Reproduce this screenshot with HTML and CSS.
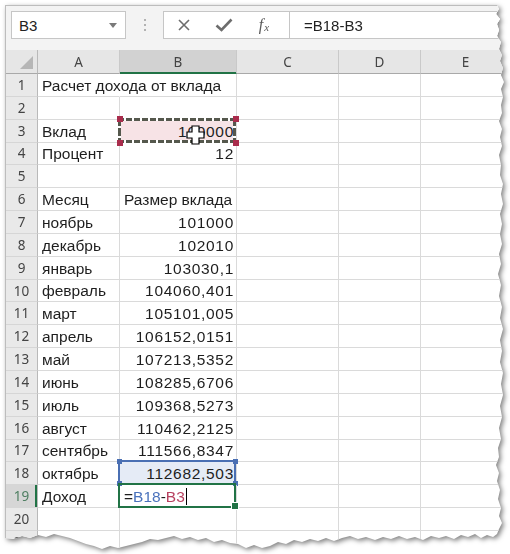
FILE: index.html
```html
<!DOCTYPE html>
<html lang="ru">
<head>
    <meta charset="UTF-8">
    <title>Расчет дохода от вклада</title>
    <link rel="stylesheet" href="styles.css">
</head>
<body>
    <div class="frame">
        <div class="sheet">
            <!-- строка имени и формулы -->
            <div class="toolbar">
                <div class="namebox">
                    <span>B3</span>
                    <svg class="drop" width="8" height="5" viewBox="0 0 8 5"><path d="M0 0h8L4 5z" fill="#7a7a7a"/></svg>
                </div>
                <div class="grip"><i></i><i></i><i></i></div>
                <div class="formula">
                    <div class="fbtns">
                        <span class="fbtn">
                            <svg width="14" height="14" viewBox="0 0 14 14"><path d="M2 2l10 10M12 2L2 12" stroke="#6d6d6d" stroke-width="1.6" fill="none"/></svg>
                        </span>
                        <span class="fbtn">
                            <svg width="18" height="14" viewBox="0 0 18 14"><path d="M1.5 7.5l5 4.5L16.5 1.5" stroke="#6d6d6d" stroke-width="2.6" fill="none"/></svg>
                        </span>
                        <span class="fbtn fx">f<small>x</small></span>
                    </div>
                    <div class="finput">=B18-B3</div>
                </div>
            </div>

            <table class="grid">
                <colgroup>
                    <col style="width:32px">
                    <col style="width:82px">
                    <col style="width:117px">
                    <col style="width:102px">
                    <col style="width:82px">
                    <col style="width:90px">
                </colgroup>
                <thead>
                    <tr>
                        <th class="corner"></th>
                        <th>A</th>
                        <th class="col-sel">B</th>
                        <th>C</th>
                        <th>D</th>
                        <th>E</th>
                    </tr>
                </thead>
                <tbody>
                    <tr><th>1</th><td class="spill">Расчет дохода от вклада</td><td></td><td></td><td></td><td></td></tr>
                    <tr><th>2</th><td></td><td></td><td></td><td></td><td></td></tr>
                    <tr><th>3</th><td>Вклад</td><td class="num ref-copy">100000
                        <svg class="cursor" width="19" height="20" viewBox="0 0 19 20"><path d="M6 1h7v6h5v6h-5v6H6v-6H1V7h5z" fill="#fff" stroke="#000" stroke-width="1.2"/></svg>
                    </td><td></td><td></td><td></td></tr>
                    <tr><th>4</th><td>Процент</td><td class="num">12</td><td></td><td></td><td></td></tr>
                    <tr><th>5</th><td></td><td></td><td></td><td></td><td></td></tr>
                    <tr><th>6</th><td>Месяц</td><td>Размер вклада</td><td></td><td></td><td></td></tr>
                    <tr><th>7</th><td>ноябрь</td><td class="num">101000</td><td></td><td></td><td></td></tr>
                    <tr><th>8</th><td>декабрь</td><td class="num">102010</td><td></td><td></td><td></td></tr>
                    <tr><th>9</th><td>январь</td><td class="num">103030,1</td><td></td><td></td><td></td></tr>
                    <tr><th>10</th><td>февраль</td><td class="num">104060,401</td><td></td><td></td><td></td></tr>
                    <tr><th>11</th><td>март</td><td class="num">105101,005</td><td></td><td></td><td></td></tr>
                    <tr><th>12</th><td>апрель</td><td class="num">106152,0151</td><td></td><td></td><td></td></tr>
                    <tr><th>13</th><td>май</td><td class="num">107213,5352</td><td></td><td></td><td></td></tr>
                    <tr><th>14</th><td>июнь</td><td class="num">108285,6706</td><td></td><td></td><td></td></tr>
                    <tr><th>15</th><td>июль</td><td class="num">109368,5273</td><td></td><td></td><td></td></tr>
                    <tr><th>16</th><td>август</td><td class="num">110462,2125</td><td></td><td></td><td></td></tr>
                    <tr><th>17</th><td>сентябрь</td><td class="num">111566,8347</td><td></td><td></td><td></td></tr>
                    <tr><th>18</th><td>октябрь</td><td class="num ref-blue">112682,503</td><td></td><td></td><td></td></tr>
                    <tr><th class="row-sel">19</th><td>Доход</td><td class="active">=<span class="r-blue">B18</span>-<span class="r-red">B3</span><span class="caret"></span></td><td></td><td></td><td></td></tr>
                    <tr><th>20</th><td></td><td></td><td></td><td></td><td></td></tr>
                    <tr><th>21</th><td></td><td></td><td></td><td></td><td></td></tr>
                </tbody>
            </table>
        </div>
    </div>
</body>
</html>
```

FILE: styles.css
```css
* {
    margin: 0;
    padding: 0;
    box-sizing: border-box;
}

body {
    width: 510px;
    height: 554px;
    overflow: hidden;
    background: #fff;
    font-family: "Liberation Sans", Arial, sans-serif;
    color: #1e1e1e;
}

/* тень вокруг рваного листа */
.frame {
    padding: 5px 0 0 5px;
    filter: drop-shadow(2px 2px 2.5px rgba(0,0,0,0.5));
}

.sheet {
    width: 502px;
    height: 545px;
    overflow: hidden;
    background: #fff;
    border-top: 1px solid #bdbdbd;
    border-left: 1px solid #bdbdbd;
    display: flex;
    flex-direction: column;
    clip-path: polygon(
        0 0, 492px 0, 494px 4px, 491px 9px, 495px 14px, 492px 19px, 494px 25px, 492px 31px,
        496px 37px, 494px 44px, 497px 50px, 495px 56px, 498px 63px, 496px 70px, 499px 77px,
        496px 84px, 498px 92px, 496px 100px, 497px 108px, 494px 116px, 497px 124px, 495px 132px,
        497px 141px, 494px 150px, 496px 160px, 495px 170px, 498px 179px, 496px 189px, 498px 199px,
        495px 209px, 497px 219px, 495px 229px, 497px 239px, 494px 249px, 496px 259px, 493px 269px,
        496px 280px, 494px 291px, 497px 302px, 495px 313px, 498px 324px, 495px 335px, 497px 346px,
        495px 357px, 498px 368px, 496px 379px, 498px 390px, 495px 401px, 497px 412px, 494px 423px,
        496px 434px, 493px 443px, 494px 452px, 491px 460px, 494px 468px, 492px 476px, 495px 485px,
        493px 494px, 496px 503px, 494px 511px, 497px 518px, 494px 524px, 492px 529px, 488px 532px,
        482px 530px, 476px 533px, 470px 529px, 463px 532px, 456px 530px, 449px 534px, 441px 531px,
        434px 533px, 426px 531px, 418px 535px, 410px 532px, 402px 534px, 394px 531px, 386px 534px,
        378px 532px, 370px 535px, 361px 532px, 353px 534px, 345px 531px, 337px 533px, 329px 536px,
        321px 533px, 313px 536px, 305px 534px, 297px 537px, 289px 535px, 281px 539px, 273px 537px,
        265px 541px, 257px 543px, 249px 540px, 241px 543px, 233px 539px, 225px 538px, 217px 535px,
        209px 537px, 201px 533px, 193px 535px, 185px 532px, 177px 534px, 169px 531px, 161px 533px,
        153px 535px, 145px 534px, 137px 537px, 129px 539px, 121px 541px, 113px 543px, 105px 541px,
        97px 544px, 89px 541px, 81px 539px, 73px 536px, 65px 533px, 57px 531px, 49px 529px,
        41px 532px, 33px 530px, 25px 533px, 17px 531px, 9px 534px, 0 533px
    );
}

/* ---------- строка формул ---------- */

.toolbar {
    height: 44px;
    flex-shrink: 0;
    background: #f3f3f3;
    display: flex;
    align-items: flex-start;
    padding: 5px 0 0 5px;
}

.namebox {
    width: 115px;
    height: 28px;
    background: #fff;
    border: 1px solid #c6c6c6;
    display: flex;
    align-items: center;
    padding: 0 8px 0 7px;
    font-size: 15px;
    color: #222;
}

.namebox .drop {
    margin-left: auto;
}

.grip {
    width: 37px;
    height: 28px;
    display: flex;
    flex-direction: column;
    align-items: center;
    justify-content: center;
    gap: 3px;
}

.grip i {
    width: 2px;
    height: 2px;
    background: #b2b2b2;
}

.formula {
    flex: 1;
    height: 28px;
    background: #fff;
    border: 1px solid #c6c6c6;
    display: flex;
}

.fbtns {
    width: 126px;
    display: flex;
    align-items: center;
    border-right: 1px solid #c6c6c6;
}

.fbtn {
    width: 40px;
    display: flex;
    justify-content: center;
    align-items: center;
}

.fx {
    font-family: "Liberation Serif", serif;
    font-style: italic;
    font-size: 16px;
    color: #5a5a5a;
}

.fx small {
    font-size: 11px;
    margin-left: 1px;
    position: relative;
    top: 2px;
}

.finput {
    padding-left: 14px;
    display: flex;
    align-items: center;
    font-size: 15px;
    color: #222;
}

/* ---------- сетка листа ---------- */

.grid {
    table-layout: fixed;
    width: 505px;
    border-collapse: separate;
    border-spacing: 0;
}

.grid thead th {
    height: 24px;
    background: #e6e6e6;
    border-right: 1px solid #c9c9c9;
    border-bottom: 1px solid #a9a9a9;
    font-family: "Noto Sans", sans-serif;
    font-weight: normal;
    font-size: 13.5px;
    color: #444;
    vertical-align: middle;
}

.grid thead th.corner {
    position: relative;
    border-right-color: #b9b9b9;
}

.corner::after {
    content: "";
    position: absolute;
    right: 4px;
    bottom: 4px;
    width: 13px;
    height: 13px;
    background: #b6b6b6;
    clip-path: polygon(100% 0, 100% 100%, 0 100%);
}

.grid thead th.col-sel {
    background: #d2d2d2;
    border-bottom-color: #217346;
    box-shadow: inset 0 -1px #217346;
}

.grid tbody tr {
    height: 22.85px;
}

.grid tbody th {
    background: #e9e9e9;
    border-right: 1px solid #b9b9b9;
    border-bottom: 1px solid #d6d6d6;
    font-family: "Noto Sans", sans-serif;
    font-weight: normal;
    font-size: 13.5px;
    color: #444;
    vertical-align: middle;
}

.grid tbody th.row-sel {
    background: #d6d6d6;
    color: #4f7f62;
    box-shadow: inset -2px 0 #217346;
}

.grid td {
    border-right: 1px solid #dadada;
    border-bottom: 1px solid #dadada;
    padding: 0 3px 1px 4px;
    font-size: 15.5px;
    line-height: 19px;
    white-space: nowrap;
    vertical-align: bottom;
}

.grid td.spill {
    border-right-color: transparent;
    overflow: visible;
}

.grid td.num {
    text-align: right;
    letter-spacing: 0.7px;
    padding-right: 2px;
}

/* ссылка B3 — пунктирная рамка и маркеры */
.ref-copy {
    position: relative;
    background: #f7e3e6;
}

.ref-copy::before {
    content: "";
    position: absolute;
    left: -2px;
    top: -2px;
    right: 0;
    bottom: -1px;
    background:
        repeating-linear-gradient(90deg, #55584d 0 6px, #fff 6px 8px) top / 100% 3px no-repeat,
        repeating-linear-gradient(90deg, #55584d 0 6px, #fff 6px 8px) bottom / 100% 3px no-repeat,
        repeating-linear-gradient(180deg, #55584d 0 8px, #fff 8px 10px) left / 3px 100% no-repeat,
        repeating-linear-gradient(180deg, #55584d 0 8px, #fff 8px 10px) right / 3px 100% no-repeat;
}

.ref-copy::after {
    content: "";
    position: absolute;
    left: -3px;
    top: -4px;
    width: 6px;
    height: 6px;
    background: #a92c4c;
    box-shadow: 116px 0 #a92c4c, 0 24px #a92c4c, 116px 24px #a92c4c;
}

.cursor {
    position: absolute;
    left: 66px;
    top: 5px;
}

/* ссылка B18 */
.ref-blue {
    position: relative;
    background: #e5ebf6;
}

.ref-blue::before {
    content: "";
    position: absolute;
    left: -2px;
    top: -2px;
    right: 0;
    bottom: -1px;
    border: 2px solid #4a6fb3;
}

.ref-blue::after {
    content: "";
    position: absolute;
    left: -3px;
    top: -3px;
    width: 5px;
    height: 5px;
    background: #4a6fb3;
    box-shadow: 116px 0 #4a6fb3, 0 22px #4a6fb3, 116px 22px #4a6fb3;
}

/* активная ячейка B19 */
.active {
    position: relative;
}

.active::before {
    content: "";
    position: absolute;
    left: -2px;
    top: -2px;
    right: 0;
    bottom: -1px;
    border: 2px solid #217346;
}

.active::after {
    content: "";
    position: absolute;
    right: -3px;
    bottom: -3px;
    width: 6px;
    height: 6px;
    background: #217346;
    border: 1px solid #fff;
}

.r-blue { color: #4a72bc; }
.r-red { color: #b8405f; }

.caret {
    display: inline-block;
    width: 1px;
    height: 17px;
    margin-left: 1px;
    background: #000;
    vertical-align: -3px;
}
```
